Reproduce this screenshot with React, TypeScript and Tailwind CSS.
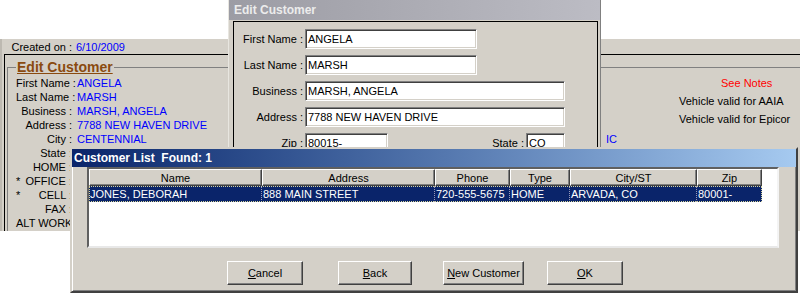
const rows = [
  { label: "First Name :", value: "ANGELA" },
  { label: "Last Name :", value: "MARSH" },
  { label: "Business :", value: "MARSH, ANGELA" },
  { label: "Address :", value: "7788 NEW HAVEN DRIVE" },
  { label: "City :", value: "CENTENNIAL" },
  { label: "State :", value: "" },
  { label: "HOME :", value: "" },
  { label: "OFFICE :", value: "", star: true },
  { label: "CELL :", value: "", star: true },
  { label: "FAX :", value: "" },
  { label: "ALT WORK :", value: "" },
];

const cols = [
  { name: "Name", w: "w-[173px]", v: "JONES, DEBORAH" },
  { name: "Address", w: "w-[173px]", v: "888 MAIN STREET" },
  { name: "Phone", w: "w-[75px]", v: "720-555-5675" },
  { name: "Type", w: "w-[60px]", v: "HOME" },
  { name: "City/ST", w: "w-[127px]", v: "ARVADA, CO" },
  { name: "Zip", w: "w-[65px]", v: "80001-" },
];

function Field({ value, w }: { value: string; w: string }) {
  return (
    <div
      className={`${w} flex h-[20px] items-center whitespace-nowrap border border-t-[#808080] border-l-[#808080] border-r-white border-b-white bg-white pl-[2px] shadow-[inset_1px_1px_0_#404040,inset_-1px_-1px_0_#d4d0c8]`}
    >
      {value}
    </div>
  );
}

function Btn({ first, rest, w, ml }: { first: string; rest: string; w: string; ml: string }) {
  return (
    <button
      type="button"
      className={`${w} ${ml} flex h-[24px] items-center justify-center border border-t-white border-l-white border-r-[#404040] border-b-[#404040] bg-[#d4d0c8] shadow-[inset_-1px_-1px_0_#808080]`}
    >
      <span>
        <span className="underline">{first}</span>
        {rest}
      </span>
    </button>
  );
}

function MainWindow() {
  return (
    <div className="absolute left-0 top-[39px] h-[192px] w-[840px] overflow-hidden border-l-2 border-l-[#bdb9b1] bg-[#d4d0c8]">
      <div className="flex h-[15px] items-center">
        <span className="w-[70px] text-right">Created on :</span>
        <span className="pl-[4px] text-[#0000ff]">6/10/2009</span>
      </div>
      <div className="ml-[2px] h-[200px] border-l border-t border-black pl-[2px] pt-[4px]">
        <fieldset className="h-[200px] border-l border-t border-[#808080]">
          <legend className="ml-[8px] px-[1px] text-[14px] leading-[17px] font-bold text-[#8a4a0f] underline">
            Edit Customer
          </legend>
          <div className="flex">
            <div className="w-[597px]">
              {rows.map((r) => (
                <div key={r.label} className="flex h-[14px] items-center">
                  <span className="w-[8px]" />
                  <span className="flex w-[56px] justify-between whitespace-nowrap">
                    <span className="shrink-0">{r.star ? "*" : ""}</span>
                    <span className="shrink-0">{r.label}</span>
                  </span>
                  <span className="pl-[5px] whitespace-nowrap text-[#0000ff]">{r.value}</span>
                </div>
              ))}
            </div>
            <div className="w-[74px] pl-[1px] pt-[56px] text-[#0000ff]">IC</div>
            <div className="flex flex-col gap-[4px] whitespace-nowrap">
              <div className="h-[14px] pl-[42px] text-[#ff0000]">See Notes</div>
              <div className="h-[14px]">Vehicle valid for AAIA</div>
              <div className="h-[14px]">Vehicle valid for Epicor</div>
            </div>
          </div>
        </fieldset>
      </div>
    </div>
  );
}

function EditWindow() {
  return (
    <div className="absolute left-[228px] top-0 h-[170px] w-[373px] border-l border-r border-l-[#e8e6e0] border-r-[#808080] bg-[#d4d0c8]">
      <div className="flex h-[20px] items-center bg-linear-to-r from-[#9c9ca4] to-[#bcbcc4] pl-[5px] text-[12px] font-bold text-[#ececec]">
        Edit Customer
      </div>
      <div className="ml-[4px] mr-[2px] mt-[1px] h-[150px] border border-black pt-[7px]">
        <div className="flex flex-col gap-[6px]">
          <div className="flex items-center">
            <span className="w-[69px] text-right">First Name :</span>
            <div className="ml-[2px]"><Field value="ANGELA" w="w-[172px]" /></div>
          </div>
          <div className="flex items-center">
            <span className="w-[69px] text-right">Last Name :</span>
            <div className="ml-[2px]"><Field value="MARSH" w="w-[172px]" /></div>
          </div>
          <div className="flex items-center">
            <span className="w-[69px] text-right">Business :</span>
            <div className="ml-[2px]"><Field value="MARSH, ANGELA" w="w-[260px]" /></div>
          </div>
          <div className="flex items-center">
            <span className="w-[69px] text-right">Address :</span>
            <div className="ml-[2px]"><Field value="7788 NEW HAVEN DRIVE" w="w-[260px]" /></div>
          </div>
          <div className="flex items-center">
            <span className="w-[69px] text-right">Zip :</span>
            <div className="ml-[2px] flex w-[260px] items-center">
              <Field value="80015-" w="w-[83px]" />
              <span className="flex-1 text-right">State :</span>
              <div className="ml-[2px]"><Field value="CO" w="w-[39px]" /></div>
            </div>
          </div>
        </div>
      </div>
    </div>
  );
}

function ListWindow() {
  return (
    <div className="absolute left-[70px] top-[147px] h-[146px] w-[728px] border-2 border-t-[#d4d0c8] border-l-[#d4d0c8] border-r-[#404040] border-b-[#404040] bg-[#d4d0c8] shadow-[inset_1px_1px_0_#fff,inset_-1px_-1px_0_#808080]">
      <div className="flex h-[18px] items-center whitespace-pre bg-linear-to-r from-[#0a246a] to-[#a6caf0] pl-[2px] text-[12px] font-bold text-white">
        Customer List  Found: 1
      </div>
      <div className="ml-[15px] h-[81px] w-[692px] border-2 border-t-[#606060] border-l-[#606060] border-r-[#f4f4f4] border-b-[#e8e8e8] bg-white">
        <div className="flex">
          {cols.map((c) => (
            <div
              key={c.name}
              className={`${c.w} flex h-[17px] items-center justify-center border border-t-white border-l-white border-r-[#404040] border-b-[#404040] bg-[#d4d0c8] shadow-[inset_-1px_-1px_0_#808080]`}
            >
              {c.name}
            </div>
          ))}
        </div>
        <div className="flex h-[16px] w-[673px] bg-[#0a246a] text-white outline-1 outline-dotted outline-[#d8d49c] -outline-offset-1">
          {cols.map((c, i) => (
            <div
              key={c.name}
              className={`${c.w} flex items-center overflow-hidden whitespace-nowrap pl-[1px] ${i < cols.length - 1 ? "border-r border-dotted border-[#9a9ab8]" : ""}`}
            >
              {c.v}
            </div>
          ))}
        </div>
      </div>
      <div className="mt-[13px] flex">
        <Btn first="C" rest="ancel" w="w-[76px]" ml="ml-[155px]" />
        <Btn first="B" rest="ack" w="w-[74px]" ml="ml-[35px]" />
        <Btn first="N" rest="ew Customer" w="w-[81px]" ml="ml-[31px]" />
        <Btn first="O" rest="K" w="w-[76px]" ml="ml-[23px]" />
      </div>
    </div>
  );
}

export default function App() {
  return (
    <div className="relative h-[295px] w-[800px] overflow-hidden bg-white font-['Liberation_Sans',Arial,sans-serif] text-[11px] leading-[14px] text-black">
      <MainWindow />
      <EditWindow />
      <ListWindow />
    </div>
  );
}
